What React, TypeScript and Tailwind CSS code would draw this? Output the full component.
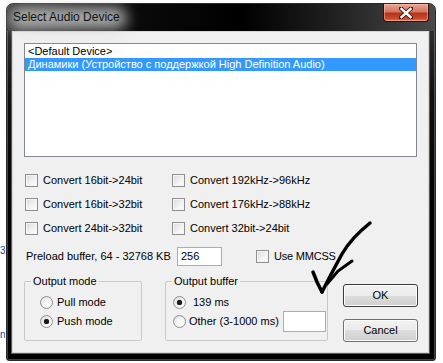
import React from "react";

const Check = () => (
  <span className="inline-block w-[13px] h-[13px] shrink-0 border border-[#8e8f8f] bg-[linear-gradient(135deg,#d8d9dc_0%,#f4f4f4_60%,#ffffff_100%)] shadow-[inset_0_0_0_1px_#f4f4f4]" />
);

const Radio = ({ on = false }: { on?: boolean }) => (
  <span className="relative inline-flex items-center justify-center w-[13px] h-[13px] shrink-0 rounded-full border border-[#8e8f8f] bg-[radial-gradient(circle_at_65%_65%,#ffffff_0%,#f2f2f2_50%,#cfd1d4_100%)]">
    {on && <span className="w-[5px] h-[5px] rounded-full bg-[#1a1a1a] shadow-[0_0_1px_#333]" />}
  </span>
);

const Btn = ({ label, def = false }: { label: string; def?: boolean }) => (
  <button
    className={
      "w-[75px] h-[23px] rounded-[3px] border text-[11px] text-black bg-[linear-gradient(#f2f2f2_0%,#ebebeb_50%,#dddddd_50%,#cfcfcf_100%)] shadow-[inset_0_0_0_1px_#fcfcfc] " +
      (def ? "border-[#3c3c3c]" : "border-[#707070]")
    }
  >
    {label}
  </button>
);

const convLeft = ["Convert 16bit->24bit", "Convert 16bit->32bit", "Convert 24bit->32bit"];
const convRight = ["Convert 192kHz->96kHz", "Convert 176kHz->88kHz", "Convert 32bit->24bit"];

export default function App() {
  return (
    <div className="relative w-[443px] h-[363px] overflow-hidden bg-white font-['Liberation_Sans',Arial,sans-serif] text-[11px] text-black leading-[13px]">
      {/* desktop behind the dialog */}
      <span className="absolute left-0 top-[244px] text-[10px] text-[#1c3f94]">3</span>
      <span className="absolute left-0 top-[328px] text-[10px] text-[#1c3f94]">n</span>

      {/* dialog window */}
      <div className="absolute left-[6px] top-[3px] w-[430px] h-[358px] flex flex-col rounded-t-[7px] rounded-b-[3px] border border-[#2a2a2a] bg-[linear-gradient(180deg,#3a3a3a_0%,#111_25%,#000_60%,#000_100%)] shadow-[inset_0_0_0_1px_rgba(255,255,255,0.25),0_0_0_1px_rgba(255,255,255,0.6)]">
        {/* title bar */}
        <div className="relative h-[27px] flex items-start rounded-t-[7px] bg-[linear-gradient(90deg,#3c3c3c_0%,#0a0a0a_30%,#000_55%,#1e1e1e_75%,#4a4a4a_100%)]">
          <div className="absolute left-[2px] top-[3px] w-[118px] h-[22px] rounded-full bg-[#cfcfcf] blur-[7px] opacity-80" />
          <span className="relative ml-[6px] mt-[6px] text-[12px] leading-[15px] text-[#111]">Select Audio Device</span>
          <div className="relative ml-auto mr-[6px] w-[46px] h-[18px] flex items-center justify-center rounded-b-[4px] border border-t-0 border-[#3a0d05] bg-[linear-gradient(180deg,#e9a694_0%,#d47762_45%,#b7321a_55%,#c9492c_85%,#e07a50_100%)] shadow-[inset_0_0_0_1px_rgba(255,210,190,0.45)]">
            <svg width="14" height="12" viewBox="0 0 14 12">
              <path d="M2 1.5 L12 10.5 M12 1.5 L2 10.5" stroke="#4a1408" strokeWidth="4.2" strokeLinecap="square" />
              <path d="M2.5 2 L11.5 10 M11.5 2 L2.5 10" stroke="#ffffff" strokeWidth="2.4" strokeLinecap="square" />
            </svg>
          </div>
        </div>

        {/* client area */}
        <div className="ml-[5px] w-[417px] h-[322px] border border-[#d6d6d6] bg-[#f0f0f0] pl-[11px] pt-[11px] shadow-[0_0_0_1px_#5a5a5a]">
          {/* device list */}
          <div className="w-[393px] h-[114px] border border-[#828790] bg-white pt-[1px]">
            <div className="h-[13px] pl-[3px] whitespace-nowrap">&lt;Default Device&gt;</div>
            <div className="h-[13px] pl-[3px] whitespace-nowrap bg-[#3399ff] text-white">
              Динамики (Устройство с поддержкой High Definition Audio)
            </div>
          </div>

          {/* conversion options */}
          <div className="mt-[11px] ml-[1px] grid grid-cols-[147px_auto]">
            {convLeft.map((l, i) => (
              <React.Fragment key={l}>
                <div className="h-[24px] flex items-center gap-[5px]">
                  <Check />
                  <span>{l}</span>
                </div>
                <div className="h-[24px] flex items-center gap-[5px]">
                  <Check />
                  <span>{convRight[i]}</span>
                </div>
              </React.Fragment>
            ))}
          </div>

          {/* preload */}
          <div className="mt-[7px] ml-[2px] flex items-center h-[19px]">
            <span className="w-[151px] whitespace-nowrap">Preload buffer, 64 - 32768 KB</span>
            <div className="w-[45px] h-[19px] border border-[#abadb3] bg-white pl-[3px] flex items-center">256</div>
            <div className="ml-[34px] flex items-center gap-[5px]">
              <Check />
              <span className="tracking-[-0.2px]">Use MMCSS</span>
            </div>
          </div>

          {/* groups + buttons */}
          <div className="mt-[9px] flex items-start">
            <fieldset className="w-[118px] h-[66px] border border-[#c9c9c9] rounded-[2px]">
              <legend className="ml-[6px] px-[2px] leading-[13px]">Output mode</legend>
              <div className="pt-[5px] pl-[15px]">
                <div className="h-[19px] flex items-center gap-[4px]">
                  <Radio />
                  <span>Pull mode</span>
                </div>
                <div className="h-[19px] flex items-center gap-[4px]">
                  <Radio on />
                  <span>Push mode</span>
                </div>
              </div>
            </fieldset>

            <fieldset className="ml-[23px] w-[163px] h-[66px] border border-[#c9c9c9] rounded-[2px]">
              <legend className="ml-[6px] px-[2px] leading-[13px]">Output buffer</legend>
              <div className="pt-[5px] pl-[7px]">
                <div className="h-[18px] flex items-center gap-[7px]">
                  <Radio on />
                  <span>139 ms</span>
                </div>
                <div className="h-[21px] flex items-center gap-[3px]">
                  <Radio />
                  <span className="whitespace-nowrap">Other (3-1000 ms)</span>
                  <div className="ml-auto mr-[1px] w-[43px] h-[21px] border border-[#abadb3] bg-white" />
                </div>
              </div>
            </fieldset>

            <div className="ml-[15px] mt-[9px] flex flex-col gap-[12px]">
              <Btn label="OK" def />
              <Btn label="Cancel" />
            </div>
          </div>
        </div>
      </div>

      {/* hand-drawn arrow over the screenshot */}
      <svg className="absolute left-0 top-0 pointer-events-none" width="443" height="363" viewBox="0 0 443 363">
        <path
          d="M370 223 C 360 231, 350 240, 342 254 C 336 265, 330 276, 322 292"
          fill="none"
          stroke="#000"
          strokeWidth="3.5"
          strokeLinecap="round"
        />
        <path d="M352 261 L 338 271 L 327 284" fill="none" stroke="#000" strokeWidth="3" strokeLinecap="round" />
        <path d="M313 272 L 317 282 L 322 292" fill="none" stroke="#000" strokeWidth="3.5" strokeLinecap="round" />
      </svg>
    </div>
  );
}
